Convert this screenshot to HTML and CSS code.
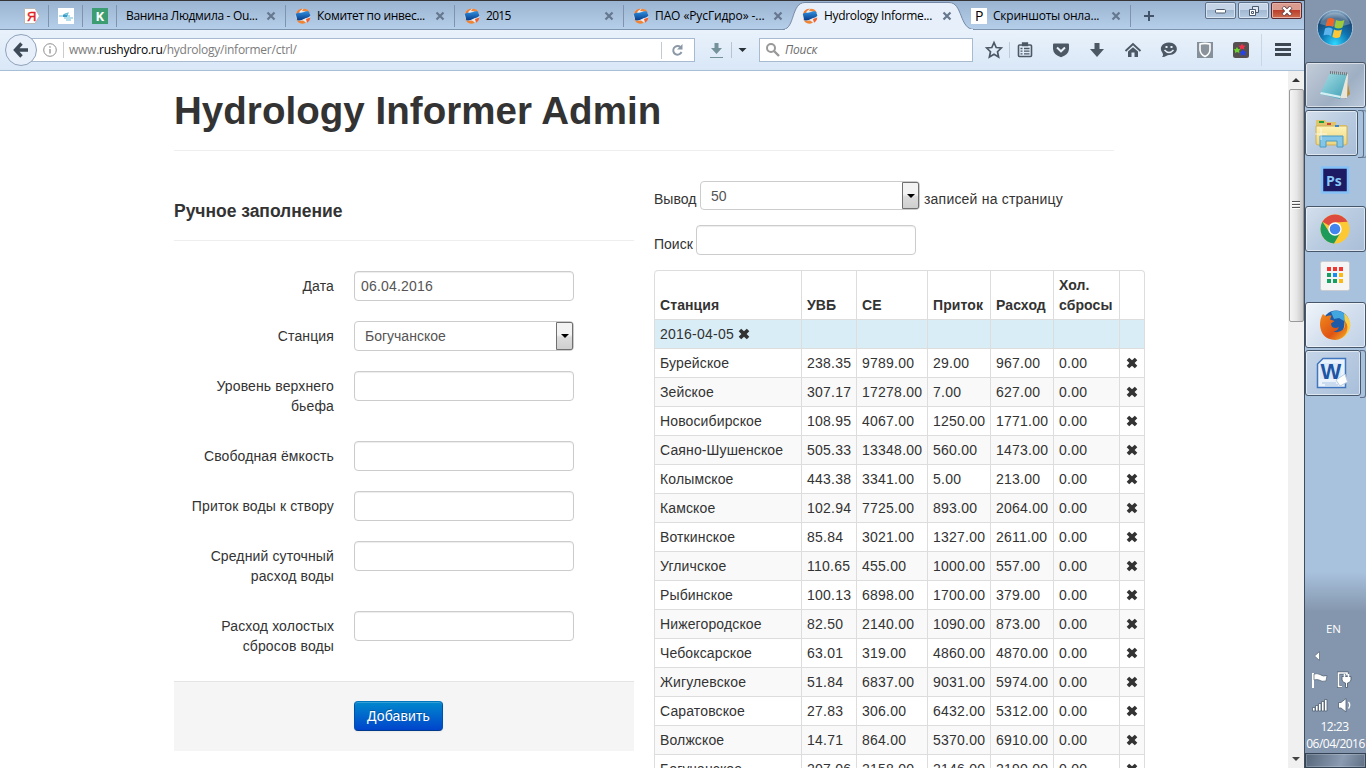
FILE: index.html
```html
<!DOCTYPE html>
<html lang="ru">
<head>
<meta charset="utf-8">
<title>Hydrology Informer Admin</title>
<link rel="stylesheet" href="styles.css">
</head>
<body>
<svg class="defs" width="0" height="0">
  <defs>
    <linearGradient id="blueball" x1="0" y1="0" x2="0" y2="1"><stop offset="0" stop-color="#2f8fe0"/><stop offset="1" stop-color="#073a86"/></linearGradient>
    <radialGradient id="orb" cx=".5" cy=".95" r=".9"><stop offset="0" stop-color="#2fd8ff"/><stop offset=".45" stop-color="#0d76b4"/><stop offset=".8" stop-color="#1a4773"/><stop offset="1" stop-color="#7d9fbe"/></radialGradient>
    <linearGradient id="note" x1="0" y1="0" x2="1" y2="1"><stop offset="0" stop-color="#a9dfe6"/><stop offset="1" stop-color="#3d9fb5"/></linearGradient>
    <linearGradient id="folder" x1="0" y1="0" x2="0" y2="1"><stop offset="0" stop-color="#fdf3b8"/><stop offset="1" stop-color="#eed57d"/></linearGradient>
    <linearGradient id="fox" x1="0" y1="0" x2="1" y2="1"><stop offset="0" stop-color="#f08a1c"/><stop offset=".6" stop-color="#df5313"/><stop offset="1" stop-color="#f6b62b"/></linearGradient>
  </defs>
  <symbol id="remove" viewBox="0 0 12 12"><path d="M3.200 .8 6 3.200 8.800 .8 11.300 3.200 8.600 6 11.300 8.800 8.800 11.200 6 8.800 3.200 11.200 .7 8.800 3.400 6 .7 3.200Z" fill="#333"/></symbol>
  <symbol id="close" viewBox="0 0 10 10"><path d="M1.500 1.500 8.500 8.500M8.500 1.500 1.500 8.500" stroke="#66788f" stroke-width="2.200"/></symbol>
  <symbol id="hydro" viewBox="0 0 16 16"><circle cx="8" cy="8" r="7.300" fill="#e9eef4"/><path d="M1 6C2 2 5 .5 8 .8L5 3 3 6Z" fill="#f27a2c"/><path d="M8.500 .7C12 .8 14 2 15 5L11 3.500 7 3Z" fill="#f4863a"/><path d="M1 10 3 13 8 12.500 11 14.500C7 17 2 15.500 1 10Z" fill="#f08433"/><path d="M11 11 15.300 9.500C15 12 14 13.500 12 14.800Z" fill="#f2602c"/><path d="M.8 6C3 4.200 5 5.200 8 4.300 10.500 3.700 12 2.800 14 3.800L15.400 7.500C14 10 12 9.400 9.500 10.800 7 12 4.500 13.200 2.200 12Z" fill="url(#blueball)"/></symbol>
</svg>
<div class="desktop">
  <div class="browser">
    <div class="tabs">
      <div class="tab pin pin-first"><svg width="16" height="16"><path d="M.5 .5H11L15.500 8 11 15.500H.5Z" fill="#fff" stroke="#b9b9b9"/><text x="3" y="13" class="ya">Я</text></svg></div>
      <div class="tab pin"><svg width="16" height="16"><path d="M0 0H16V16H0Z" fill="#fff"/><path d="M1 8H6L7 6 10 5 9 8H12M6 10H15M8 12H13" stroke="#6bbbd9" stroke-width="1.100" fill="none"/><path d="M5 6.500H9V9H5Z" fill="#3a9dc6"/></svg></div>
      <div class="tab pin"><svg width="16" height="16"><path d="M0 0H16V16H0Z" fill="#3c9d73"/><text x="3.500" y="13" class="kk">K</text></svg></div>
      <div class="tab noicon"><span class="tt t1">Ванина Людмила - Ou...</span><svg class="x" width="10" height="10"><use href="#close"/></svg></div>
      <div class="tab"><svg width="16" height="16"><use href="#hydro"/></svg><span class="tt t2">Комитет по инвес...</span><svg class="x" width="10" height="10"><use href="#close"/></svg></div>
      <div class="tab"><svg width="16" height="16"><use href="#hydro"/></svg><span class="tt t3">2015</span><svg class="x" width="10" height="10"><use href="#close"/></svg></div>
      <div class="tab nosep"><svg width="16" height="16"><use href="#hydro"/></svg><span class="tt t4">ПАО «РусГидро» -...</span><svg class="x" width="10" height="10"><use href="#close"/></svg></div>
      <div class="tab active nosep"><svg class="shape" width="192" height="29"><path d="M0 28.500C12 28 8 1.500 22 1.500H166C180 1.500 176 28 191 28.500" fill="#e7f0fa" stroke="#7489a5"/><path d="M2 28.500H190" stroke="#e7f0fa"/></svg><svg class="ico" width="16" height="16"><use href="#hydro"/></svg><span class="tt t5">Hydrology Informe...</span><svg class="x" width="10" height="10"><use href="#close"/></svg></div>
      <div class="tab"><svg width="16" height="16"><path d="M0 0H16V16H0Z" fill="#fff"/><text x="4" y="13" class="pp">P</text></svg><span class="tt t6">Скриншоты онла...</span><svg class="x" width="10" height="10"><use href="#close"/></svg></div>
      <svg class="plus" width="12" height="12"><path d="M6 1V11M1 6H11" stroke="#43536a" stroke-width="2"/></svg>
      <div class="winbtns">
        <div class="wb"><svg width="12" height="8"><rect x=".5" y="2.500" width="10" height="3.500" rx="1" fill="#fff" stroke="#4b596d"/></svg></div>
        <div class="wb"><svg width="12" height="12"><path d="M4.500 1.500H10.500V7.500H4.500Z" fill="#dfe8f2" stroke="#4b596d"/><path d="M1.500 4.500H7.500V10.500H1.500Z" fill="#fff" stroke="#4b596d"/><path d="M3.500 6.500H5.500V8.500H3.500Z" fill="none" stroke="#4b596d"/></svg></div>
        <div class="wb red"><svg width="12" height="10"><path d="M2 1 10 9M10 1 2 9" stroke="#5b3a3e" stroke-width="4"/><path d="M2.300 1.300 9.700 8.700M9.700 1.300 2.300 8.700" stroke="#fff" stroke-width="2.400"/></svg></div>
      </div>
    </div>
    <div class="nav">
      <svg class="back" width="34" height="34"><circle cx="17" cy="17" r="15.500" fill="#e6effa" stroke="#90a2ba"/><path d="M17.500 10.500 11.500 17 17.500 23.500M12 17H24" fill="none" stroke="#3e4a57" stroke-width="3.400"/></svg>
      <div class="url">
        <svg class="info" width="14" height="14"><circle cx="7" cy="7" r="6.300" fill="none" stroke="#8f8f8f"/><path d="M7 6V10.500M7 3.300V4.700" stroke="#8f8f8f" stroke-width="1.300"/></svg>
        <span class="addr">www.<b>rushydro.ru</b>/hydrology/informer/ctrl/</span>
        <svg class="reload" width="33" height="22"><path d="M.5 3V20" stroke="#c4cad2"/><path d="M19.500 8.200A4.300 4.300 0 1 0 20.500 13" fill="none" stroke="#8b98a6" stroke-width="2"/><path d="M21.500 5V10.500H16Z" fill="#8b98a6"/></svg>
      </div>
      <svg class="dl" width="38" height="20"><path d="M5.500 3H9.500V8H13L7.500 14 2 8H5.500Z" fill="#75919a"/><path d="M1 17.500H14" stroke="#75919a"/><path d="M22.500 2V18" stroke="#b7c4d3"/><path d="M29.500 8H37.500L33.500 12Z" fill="#263036"/></svg>
      <div class="search"><svg width="14" height="14"><circle cx="5" cy="5" r="4" fill="none" stroke="#999" stroke-width="2"/><path d="M8 8 13 13" stroke="#999" stroke-width="2.400"/></svg><i>Поиск</i></div>
      <div class="tools">
        <svg width="36" height="20"><path d="M18 2.500 20.200 7.500 25.300 8 21.500 11.700 22.600 17 18 14.200 13.400 17 14.500 11.700 10.700 8 15.800 7.500Z" fill="none" stroke="#4c5864" stroke-width="1.700"/><path d="M33.500 2V18" stroke="#bfcbd9"/></svg>
        <svg width="36" height="20"><rect x="6.500" y="5" width="13" height="11.500" rx="1" fill="none" stroke="#4c5864" stroke-width="1.600"/><path d="M10.500 3H15.500V5.500H10.500ZM8.500 8.500H10.500M12 8.500H17.500M8.500 11.200H10.500M12 11.200H17.500M8.500 13.900H10.500M12 13.900H17.500" stroke="#4c5864" stroke-width="1.300" fill="#4c5864"/></svg>
        <svg width="36" height="20"><path d="M5 4.500Q5 3.500 6 3.500H20Q21 3.500 21 4.500V9Q20.500 15 13 17.200 5.500 15 5 9Z" fill="#4c5864"/><path d="M9 7.500 13 11.300 17 7.500" fill="none" stroke="#e6effa" stroke-width="2"/></svg>
        <svg width="36" height="20"><path d="M10.500 3H15.500V9H20L13 17 6 9H10.500Z" fill="#4c5864"/></svg>
        <svg width="36" height="20"><path d="M5.500 11 13 4 20.500 11" fill="none" stroke="#4c5864" stroke-width="1.800"/><path d="M8 11.500 13 7.200 18 11.500V17H14.500V12.500H11.500V17H8Z" fill="#4c5864"/></svg>
        <svg width="36" height="20"><path d="M13 2.500C23 2.500 24 15 13 15 11 15 9 17.500 6 17 7.500 15.500 7 14.500 6.500 13 2.500 8 6 2.500 13 2.500Z" fill="#4c5864"/><path d="M9.500 6H11.500V8H9.500ZM14.500 6H16.500V8H14.500Z" fill="#e6effa"/><path d="M8.500 10Q13 15 17.500 10" fill="none" stroke="#e6effa" stroke-width="1.500"/></svg>
        <svg width="36" height="20"><rect x="5" y="2" width="16" height="16" fill="#86909a"/><path d="M8 4Q13 2.800 18 4V10Q17.500 14.500 13 16.500 8.500 14.500 8 10Z" fill="#8a939c" stroke="#fff" stroke-width="1.600"/></svg>
        <svg width="26" height="20"><rect x="5" y="2" width="16" height="16" rx="2.500" fill="#554f50"/><path d="M14 3.500 15.200 5.500 17.500 5.700 16 7.300 16.400 9.500 14 8.500 12 9.500 12 7.300 10.500 5.700 12.800 5.500Z" fill="#f1304c"/><path d="M9 7 10.200 9 12.500 9.200 11 10.800 11.400 13 9 12 7 13 7 10.800 5.500 9.200 7.800 9Z" fill="#6cd32c"/><path d="M15 9.500 16.200 11.500 18.500 11.700 17 13.300 17.400 16 15 14.500 13 16 13 13.300 11.500 11.700 13.800 11.500Z" fill="#2442ef"/></svg>
        <svg class="menu" width="34" height="32"><path d="M.5 0V32" stroke="#c9d6e6"/><path d="M14 10.500H30M14 15.500H30M14 20.500H30" stroke="#3d4751" stroke-width="2.800"/></svg>
      </div>
    </div>
    <div class="view">
      <div class="page">
        <h1>Hydrology Informer Admin</h1>
        <div class="cols">
          <div class="left">
            <h4>Ручное заполнение</h4>
            <div class="group"><label>Дата</label><div class="input date-input">06.04.2016</div></div>
            <div class="group"><label>Станция</label><div class="input select">Богучанское<span class="arrow"></span></div></div>
            <div class="group"><label>Уровень верхнего бьефа</label><div class="input"></div></div>
            <div class="group"><label>Свободная ёмкость</label><div class="input"></div></div>
            <div class="group"><label>Приток воды к створу</label><div class="input"></div></div>
            <div class="group"><label>Средний суточный расход воды</label><div class="input"></div></div>
            <div class="group"><label>Расход холостых сбросов воды</label><div class="input"></div></div>
            <div class="actions"><div class="btn">Добавить</div></div>
          </div>
          <div class="right">
            <div class="filter f1"><span>Вывод</span><div class="input select short">50<span class="arrow"></span></div><span class="per">записей на страницу</span></div>
            <div class="filter f2"><span>Поиск</span><div class="input"></div></div>
            <table>
              <colgroup><col class="c1"><col class="c2"><col class="c3"><col class="c4"><col class="c5"><col class="c6"><col class="c7"></colgroup>
              <thead><tr><th>Станция</th><th>УВБ</th><th>СЕ</th><th>Приток</th><th>Расход</th><th>Хол. сбросы</th><th></th></tr></thead>
              <tbody>
              <tr class="date"><td>2016-04-05 <svg width="12" height="12"><use href="#remove"/></svg></td><td></td><td></td><td></td><td></td><td></td><td></td></tr>
              <tr><td>Бурейское</td><td>238.35</td><td>9789.00</td><td>29.00</td><td>967.00</td><td>0.00</td><td><svg width="12" height="12"><use href="#remove"/></svg></td></tr>
              <tr><td>Зейское</td><td>307.17</td><td>17278.00</td><td>7.00</td><td>627.00</td><td>0.00</td><td><svg width="12" height="12"><use href="#remove"/></svg></td></tr>
              <tr><td>Новосибирское</td><td>108.95</td><td>4067.00</td><td>1250.00</td><td>1771.00</td><td>0.00</td><td><svg width="12" height="12"><use href="#remove"/></svg></td></tr>
              <tr><td>Саяно-Шушенское</td><td>505.33</td><td>13348.00</td><td>560.00</td><td>1473.00</td><td>0.00</td><td><svg width="12" height="12"><use href="#remove"/></svg></td></tr>
              <tr><td>Колымское</td><td>443.38</td><td>3341.00</td><td>5.00</td><td>213.00</td><td>0.00</td><td><svg width="12" height="12"><use href="#remove"/></svg></td></tr>
              <tr><td>Камское</td><td>102.94</td><td>7725.00</td><td>893.00</td><td>2064.00</td><td>0.00</td><td><svg width="12" height="12"><use href="#remove"/></svg></td></tr>
              <tr><td>Воткинское</td><td>85.84</td><td>3021.00</td><td>1327.00</td><td>2611.00</td><td>0.00</td><td><svg width="12" height="12"><use href="#remove"/></svg></td></tr>
              <tr><td>Угличское</td><td>110.65</td><td>455.00</td><td>1000.00</td><td>557.00</td><td>0.00</td><td><svg width="12" height="12"><use href="#remove"/></svg></td></tr>
              <tr><td>Рыбинское</td><td>100.13</td><td>6898.00</td><td>1700.00</td><td>379.00</td><td>0.00</td><td><svg width="12" height="12"><use href="#remove"/></svg></td></tr>
              <tr><td>Нижегородское</td><td>82.50</td><td>2140.00</td><td>1090.00</td><td>873.00</td><td>0.00</td><td><svg width="12" height="12"><use href="#remove"/></svg></td></tr>
              <tr><td>Чебоксарское</td><td>63.01</td><td>319.00</td><td>4860.00</td><td>4870.00</td><td>0.00</td><td><svg width="12" height="12"><use href="#remove"/></svg></td></tr>
              <tr><td>Жигулевское</td><td>51.84</td><td>6837.00</td><td>9031.00</td><td>5974.00</td><td>0.00</td><td><svg width="12" height="12"><use href="#remove"/></svg></td></tr>
              <tr><td>Саратовское</td><td>27.83</td><td>306.00</td><td>6432.00</td><td>5312.00</td><td>0.00</td><td><svg width="12" height="12"><use href="#remove"/></svg></td></tr>
              <tr><td>Волжское</td><td>14.71</td><td>864.00</td><td>5370.00</td><td>6910.00</td><td>0.00</td><td><svg width="12" height="12"><use href="#remove"/></svg></td></tr>
              <tr><td>Богучанское</td><td>207.06</td><td>2158.00</td><td>2146.00</td><td>2190.00</td><td>0.00</td><td><svg width="12" height="12"><use href="#remove"/></svg></td></tr>
              </tbody>
            </table>
          </div>
        </div>
      </div>
      <div class="scroll">
        <svg width="16" height="18"><path d="M4 11H12L8 7Z" fill="#333"/></svg>
        <div class="thumb"><svg width="8" height="9"><path d="M0 .5H8M0 3.500H8M0 6.500H8" stroke="#555"/><path d="M0 1.500H8M0 4.500H8M0 7.500H8" stroke="#fff"/></svg></div>
        <svg class="down" width="16" height="18"><path d="M4 7H12L8 11Z" fill="#444"/></svg>
      </div>
    </div>
  </div>
  <div class="taskbar">
    <div class="slot start"><svg width="38" height="38"><circle cx="19" cy="19" r="17.700" fill="url(#orb)" stroke="#a5bfd5" stroke-width="1"/><path d="M4 15A15.500 15.500 0 0 1 34 15Q20 20 4 15Z" fill="#fff" opacity=".25"/><path d="M11.500 10Q15 8 18.500 10.500L17 18Q13.500 15.800 9.500 17.500Z" fill="#f0642b"/><path d="M20 11Q24 13 28.500 11L26.500 18.500Q22.500 20.500 18.500 18.500Z" fill="#9dcb3b"/><path d="M9 19.500Q13 17.500 16.700 20L15 27Q11.500 25 7.500 26.500Z" fill="#5eb5ee"/><path d="M18 20.500Q22 22.500 26 20.500L24 28Q20 30 16.400 27.700Z" fill="#fcc83a"/></svg></div>
    <div class="slot app notepad"><svg width="34" height="34"><path d="M28 6 32 26 27 31Z" fill="#b98c36"/><path d="M12 5 30 6 29 30 22 30Z" fill="#e8e6dc"/><path d="M12 5 29 6 22 31 2 26Z" fill="url(#note)"/><path d="M12 4.500 30 6" stroke="#777" stroke-width="3" stroke-dasharray="1 1"/><path d="M2 26 22 30 23 28 3 24Z" fill="#d5eef2"/></svg></div>
    <div class="slot app stack explorer"><svg width="34" height="34"><path d="M2 4H11L12 6H22V9H31Q33 9 33 11V27Q33 29 31 29H4Q2 29 2 27Z" fill="#dfc46d"/><path d="M2 10H33V27Q33 29 31 29H4Q2 29 2 27Z" fill="url(#folder)" stroke="#cfae58"/><path d="M5 5H10V7H5Z" fill="#1b9a38"/><path d="M13 7H17V9H13Z" fill="#cd4535"/><path d="M21 9H25V11H21Z" fill="#3688d4"/><path d="M6 20H29V31H23V25H12V31H6Z" fill="#83c6e8" stroke="#4d9ac1"/><path d="M7 12V24M1 18H13" stroke="#fff" opacity=".7"/></svg></div>
    <div class="slot plain ps"><svg width="30" height="30"><rect x="2" y="1.500" width="26" height="25" fill="#1d1b63" stroke="#83c1f8" stroke-width="2.500"/><text x="6" y="20" class="pst">Ps</text></svg></div>
    <div class="slot app chrome"><svg width="30" height="30"><circle cx="15" cy="15" r="14.500" fill="#fcc934"/><path d="M15 15 2.450 7.750A14.500 14.500 0 0 1 27.550 7.750L15 8.500Z" fill="#dd4b3e"/><path d="M2.450 7.750A14.500 14.500 0 0 0 14 29.500L20.600 18.200 9.400 18.200Z" fill="#1e9b5a"/><circle cx="15" cy="15" r="6.700" fill="#fff"/><circle cx="15" cy="15" r="5.300" fill="#4285ef"/></svg></div>
    <div class="slot plain apps"><svg width="30" height="30"><rect x=".5" y=".5" width="29" height="29" rx="2" fill="#f5f5f5" stroke="#c9ccd0"/><path d="M7 6H11V10H7ZM13 6H17V10H13ZM19 6H23V10H19Z" fill="#f2362f"/><path d="M7 12H11V16H7ZM7 18H11V22H7Z" fill="#14a061"/><path d="M13 12H17V16H13Z" fill="#178df2"/><path d="M13 18H17V22H13Z" fill="#14a061"/><path d="M19 12H23V16H19ZM19 18H23V22H19Z" fill="#fdb913"/></svg></div>
    <div class="slot app light firefox"><svg width="32" height="32"><circle cx="17" cy="15" r="13.500" fill="#1d5ba8"/><path d="M12 3Q22 -1 28 8L25 12 20 9 15 10Z" fill="#42a6df"/><path d="M25 4Q33 11 31 19 28 29 18 30.500 28 22 25 4Z" fill="#fbcf45"/><path d="M4 5 7 7.500Q9 6 12.500 6.500L11 10.500 15.500 12 12 14.500Q12 19 17 19L20 18Q18.500 22 14.500 22.500 20 25 24.500 20 27 16.500 26 12 30.500 18 27 24.500 23 31 16 31 2 30 1 16 1 9 4 5Z" fill="url(#fox)"/></svg></div>
    <div class="slot app stack word"><svg width="32" height="32"><path d="M7 1.500H29.500V30.500H1.500V7Z" fill="#eaf2fc" stroke="#3f76bd" stroke-width="1.500"/><path d="M4 6H25V22H4Z" fill="#dce9f8"/><text x="4.500" y="22" class="wt">W</text><path d="M6 26H20M9 28H22" stroke="#abc3e2"/><path d="M20 23 29 17 31.500 25 24 29Z" fill="#fff" stroke="#bccde2"/></svg></div>
    <div class="tray">
      <div class="lang">EN</div>
      <svg class="chev" width="8" height="10"><path d="M6.500 .5V9.500L1.500 5Z" fill="#fff" stroke="#5f6e80" stroke-width=".8"/></svg>
      <svg class="trayicons" width="46" height="50">
        <path d="M5 5V20" stroke="#fff" stroke-width="2"/><path d="M6 6Q9 5 12 6.500 15 9 19 7.500L18 13Q14 14 11 12 9 11 6 12Z" fill="#fff" stroke="#516174" stroke-width=".7"/>
        <path d="M39 7V5H30.500V18.500H34" fill="none" stroke="#516174" stroke-width="3"/><path d="M39 7V5H30.500V18.500H34" fill="none" stroke="#fff" stroke-width="1.700"/><path d="M34 8.500H43V12Q42 15 39.500 15V19.500H37.500V15Q35 15 34 12Z" fill="#fff" stroke="#516174" stroke-width=".9"/><path d="M36.500 6V9M40.500 6V9" stroke="#fff" stroke-width="1.500"/>
        <path d="M4.500 39.500H7V43H4.500ZM7.500 37.500H10V43H7.500ZM10.500 35.500H13V43H10.500ZM13.500 33.500H16V43H13.500ZM16.500 31.500H19V43H16.500Z" fill="#fff" stroke="#516174" stroke-width=".8"/>
        <path d="M30.500 34.500H33L38 30.500V44L33 40H30.500Z" fill="#fff" stroke="#516174" stroke-width=".8"/><path d="M40.500 34Q43 37 40.500 40.500" fill="none" stroke="#fff" stroke-width="1.300"/>
      </svg>
      <div class="time">12:23</div>
      <div class="day">06/04/2016</div>
    </div>
    <div class="peek"></div>
  </div>
</div>
</body>
</html>
```
FILE: styles.css
```css
* { box-sizing: border-box; }
body { margin: 0; width: 1366px; height: 768px; overflow: hidden; font: 14px/20px "Liberation Sans", Arial, sans-serif; color: #333; background: #fff; }
svg { flex: none; }
.defs { position: absolute; }
.desktop { display: flex; width: 1366px; height: 768px; }
.browser { width: 1304px; height: 768px; display: flex; flex-direction: column; overflow: hidden; }

.tabs { display: flex; height: 30px; flex: none; border-top: 1px solid #373435; border-bottom: 1px solid #7d92ad; background: linear-gradient(#9ab3d0, #b5cee9); font: 12px/16px "Open Sans", "Noto Sans", sans-serif; color: #000; }
.tab { position: relative; display: flex; align-items: center; width: 169px; height: 29px; padding: 1px 0 0 9px; flex: none; }
.tab::after { content: ""; position: absolute; right: 0; top: 4px; width: 1px; height: 22px; background: #7f93ad; }
.tab.nosep::after { display: none; }
.pin { width: 34px; padding-left: 9px; }
.pin-first { width: 49px; padding-left: 24px; }
.tt { width: 118px; margin-left: 6px; white-space: nowrap; overflow: hidden; }
.noicon .tt { width: 140px; margin-left: 0; }
.t1, .t2, .t5 { letter-spacing: -.32px; }
.t3 { letter-spacing: -.7px; }
.t4 { letter-spacing: -.1px; }
.t6 { letter-spacing: -.22px; }
.active { z-index: 1; }
.shape { position: absolute; left: -10px; top: 0; }
.ico, .active .tt, .active .x { position: relative; }
.ya { font: 13px "Liberation Sans", sans-serif; fill: #e02020; stroke: #e02020; stroke-width: .4px; }
.kk { font: bold 13px "Open Sans", sans-serif; fill: #fff; }
.pp { font: 14px "Open Sans", sans-serif; fill: #000; }
.plus { margin: 9px 0 0 12px; }
.winbtns { display: flex; gap: 2px; margin: 1px 2px 0 auto; }
.wb { width: 31px; height: 17px; border: 1px solid #5f7189; border-radius: 2px; background: linear-gradient(#c5d5e7 50%, #a2b9d3 50%, #b7cce3); box-shadow: inset 0 0 0 1px #d7e3f0; display: flex; align-items: center; justify-content: center; }
.wb.red { background: linear-gradient(#dc9b8f 50%, #bb3f2c 50%, #cf6d50); border-color: #5b2932; box-shadow: inset 0 0 0 1px #e5b1a5; }

.nav { display: flex; height: 41px; flex: none; align-items: center; padding-left: 4px; border-bottom: 1px solid #a9bed7; background: linear-gradient(#e9f2fb, #d9e7f7); font: 12px/16px "Open Sans", "Noto Sans", sans-serif; }
.back { position: relative; z-index: 1; }
.url { width: 665px; height: 24px; margin-left: -8px; border: 1px solid #a8bad0; background: #fff; display: flex; align-items: center; padding-left: 12px; }
.info { margin-right: 6px; }
.addr { border-left: 1px solid #ccc; padding-left: 5px; color: #7c7c7c; letter-spacing: -.25px; flex: 1; }
.addr b { font-weight: 400; color: #000; }
.dl { margin-left: 14px; }
.search { width: 214px; height: 24px; margin-left: 12px; border: 1px solid #a8bad0; background: #fff; display: flex; align-items: center; padding-left: 6px; gap: 5px; color: #6d6d6d; }
.search i { letter-spacing: -.2px; }
.tools { display: flex; align-items: center; margin-left: 3px; }
.menu { margin-left: 7px; }

.view { display: flex; flex: 1; min-height: 0; }
.page { width: 1288px; padding: 20px 0 0 174px; overflow: hidden; }
h1 { width: 940px; margin: 0 0 30px; padding-bottom: 19px; border-bottom: 1px solid #eee; font-size: 38.5px; line-height: 40px; letter-spacing: .04px; }
.cols { display: flex; gap: 20px; }
.left { width: 460px; padding-top: 20px; }
h4 { margin: 0 0 30px; padding-bottom: 19px; border-bottom: 1px solid #eee; font-size: 17.5px; line-height: 20px; letter-spacing: -.03px; }
.group { display: flex; margin-bottom: 20px; }
.group label { width: 160px; padding-top: 5px; text-align: right; margin: 0 20px 5px 0; letter-spacing: .12px; }
.input { position: relative; width: 220px; height: 30px; border: 1px solid #ccc; border-radius: 4px; padding: 4px 6px; color: #555; background: #fff; box-shadow: inset 0 1px 1px rgba(0,0,0,.075); }
.date-input { letter-spacing: .2px; }
.select { padding-left: 10px; box-shadow: none; }
.short { height: 29px; }
.arrow { position: absolute; right: 0; top: 0; bottom: 0; width: 17px; border: 1px solid #707070; border-radius: 0 2px 2px 0; background: linear-gradient(#f3f3f3 45%, #dcdcdc 55%, #cfcfcf); }
.arrow::after { content: ""; position: absolute; left: 4px; top: 11px; border: 4px solid transparent; border-top-color: #000; border-bottom: 0; }
.actions { height: 70px; padding: 19px 0 0 180px; border-top: 1px solid #e5e5e5; background: #f5f5f5; }
.btn { width: 89px; height: 30px; padding-top: 4px; text-align: center; color: #fff; letter-spacing: .15px; border: 1px solid; border-color: #0077bd #0052a8 #003a8c; border-radius: 4px; background: linear-gradient(#0088cc, #0044cc); box-shadow: inset 0 1px 0 rgba(255,255,255,.2), 0 1px 2px rgba(0,0,0,.05); text-shadow: 0 -1px 0 rgba(0,0,0,.25); }
.right { width: 491px; }
.filter { display: flex; gap: 4px; }
.filter > span { width: 42px; padding-top: 8px; white-space: nowrap; }
.filter .per { width: auto; letter-spacing: .2px; }
.f1 { height: 44px; }
.f2 { height: 45px; }
.f2 > span { width: 38px; padding-top: 9px; }

table { width: 491px; table-layout: fixed; border-spacing: 0; border: 1px solid #ddd; border-left: 0; border-radius: 4px 4px 0 0; }
.c1 { width: 147px; } .c2 { width: 55px; } .c3 { width: 71px; } .c4, .c5 { width: 63px; } .c6 { width: 66px; } .c7 { width: 25px; }
th, td { border-left: 1px solid #ddd; padding: 4px 5px; line-height: 20px; text-align: left; white-space: nowrap; }
th { height: 48px; vertical-align: bottom; white-space: normal; letter-spacing: .1px; }
th:first-child { border-top-left-radius: 4px; }
td { height: 29px; border-top: 1px solid #ddd; vertical-align: top; letter-spacing: .24px; }
td:first-child { letter-spacing: .13px; }
.date td:first-child { letter-spacing: .24px; }
td svg { vertical-align: -1px; }
td:last-child { padding-left: 6px; }
tbody tr:nth-child(odd) td { background: #f9f9f9; }
tbody tr.date td { background: #d9edf7; }

.scroll { width: 16px; display: flex; flex-direction: column; background: #f0f0f0; }
.thumb { width: 15px; height: 233px; margin-left: 1px; border: 1px solid #999; border-radius: 2px; background: linear-gradient(90deg, #f5f5f5, #e6e6e6 50%, #c6c6c8); display: flex; align-items: center; justify-content: center; padding-right: 2px; }
.down { margin-top: auto; }

.taskbar { width: 62px; height: 768px; display: flex; flex-direction: column; border-left: 1px solid #3f4d5f; background: linear-gradient(#8496ad 62px, #a8c1dd 107px, #a8c1dd 572px, #8496ad 612px); }
.slot { display: flex; align-items: center; justify-content: center; flex: none; padding-right: 2px; }
.start { height: 62px; align-items: flex-start; padding-top: 9px; }
.app { position: relative; height: 46px; width: 61px; border: 1px solid #46566b; border-radius: 3px; background: linear-gradient(135deg, #d4dfec, #b8cbe0 50%, #aabed8); box-shadow: inset 0 0 0 1px rgba(255,255,255,.55); }
.notepad { background: linear-gradient(135deg, #c4cdd9, #9fafc3 60%, #b9c8da); }
.explorer { margin-top: 2px; }
.stack { width: 53px; }
.stack::after { content: ""; position: absolute; left: 52px; top: -1px; width: 5px; height: 46px; border: 1px solid #5c6d84; border-left: 0; border-radius: 0 3px 3px 0; }
.explorer::before { content: ""; position: absolute; left: 56px; top: -1px; width: 4px; height: 46px; border: 1px solid #7588a0; border-left: 0; border-radius: 0 3px 3px 0; }
.ps { height: 50px; }
.apps { height: 50px; padding-bottom: 2px; }
.light { background: linear-gradient(135deg, #f0f5fa, #d2deed 55%, #c0d1e6); }
.word { width: 56px; margin-top: 2px; background: linear-gradient(135deg, #c5d5e8, #a8bed9); }
.word::after { left: 54px; }
.pst { font: bold 14px "Open Sans", sans-serif; fill: #86c8f7; }
.wt { font: bold 22px "Liberation Sans", sans-serif; fill: #1d54a5; }
.tray { margin-top: auto; height: 132px; display: flex; flex-direction: column; align-items: center; color: #fff; font: 12px/16px "Open Sans", "Noto Sans", sans-serif; white-space: nowrap; }
.lang { font-size: 11.5px; padding-right: 4px; letter-spacing: 0; }
.chev { margin: 14px 0 0 8px; align-self: flex-start; }
.trayicons { align-self: flex-start; margin: 7px 0 0 3px; }
.time { letter-spacing: -.5px; margin-top: 1px; padding-right: 2px; }
.day { letter-spacing: -.52px; margin-top: 1px; }
.peek { height: 15px; flex: none; border: 1px solid #344456; background: linear-gradient(110deg, #56677c, #8b9cb2 60%, #5f7085); box-shadow: inset 0 0 0 1px rgba(255,255,255,.2); }
```
